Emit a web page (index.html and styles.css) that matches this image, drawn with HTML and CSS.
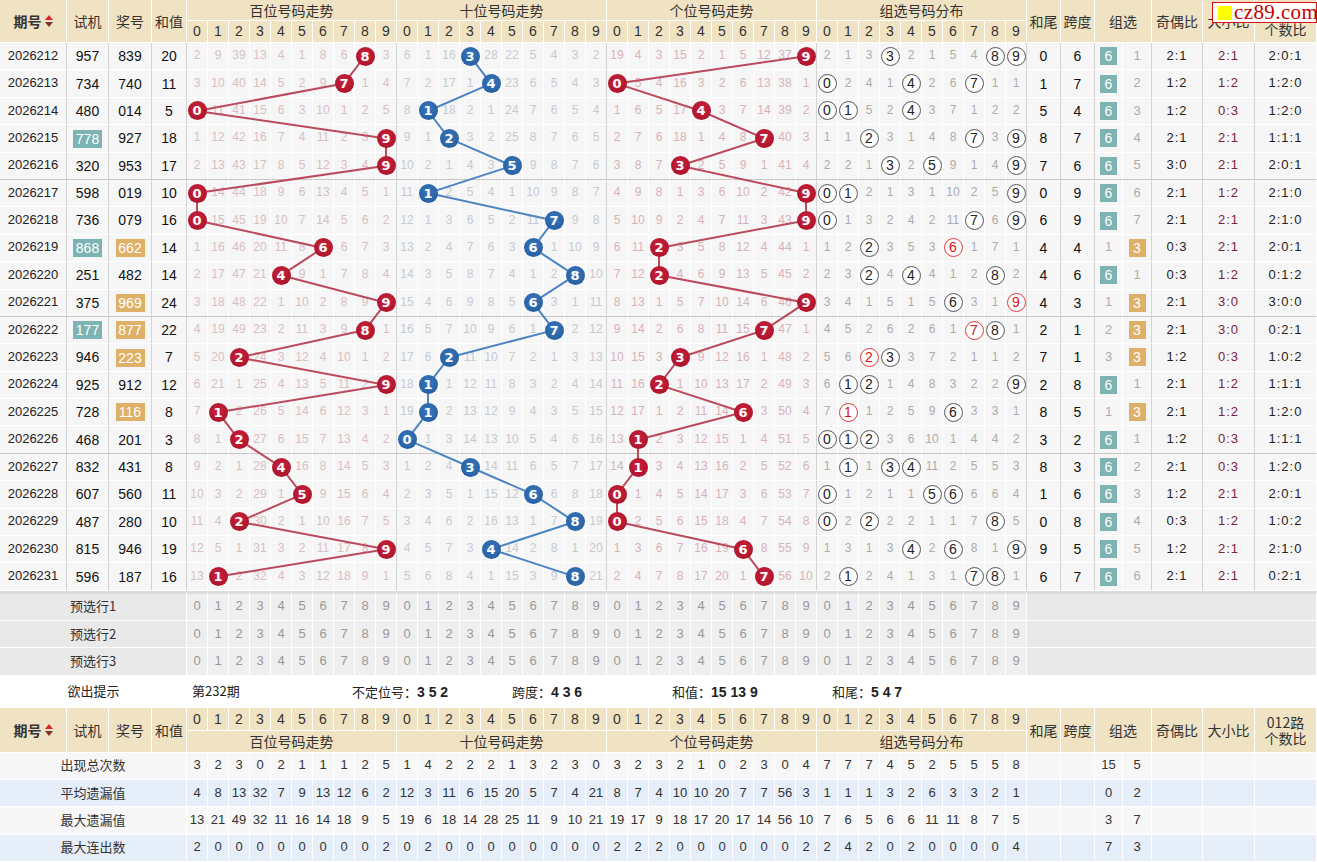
FILE: index.html
```html
<!DOCTYPE html>
<html lang="zh-CN">
<head>
<meta charset="utf-8">
<title>3D走势图</title>
<link rel="stylesheet" href="styles.css">
</head>
<body>
<div class="wrap" id="wrap">
  <table class="chart">
    <colgroup>
      <col class="c-qh"><col class="c-sj"><col class="c-jh"><col class="c-hz">
      <col span="40" class="c-d">
      <col class="c-hw"><col class="c-kd"><col class="c-zx"><col class="c-zx2"><col class="c-jo"><col class="c-dx"><col class="c-lu">
    </colgroup>
    <thead class="head">
      <tr class="h1">
        <th rowspan="2" class="qhh"><span class="qht">期号<svg class="sort" width="8" height="12" viewBox="0 0 8 12"><path d="M4 0L8 5H0Z" fill="#d9262b"/><path d="M0 7H8L4 12Z" fill="#7a3232"/></svg></span></th>
        <th rowspan="2">试机</th>
        <th rowspan="2">奖号</th>
        <th rowspan="2">和值</th>
        <th colspan="10" class="gt">百位号码走势</th>
        <th colspan="10" class="gt">十位号码走势</th>
        <th colspan="10" class="gt">个位号码走势</th>
        <th colspan="10" class="gt">组选号码分布</th>
        <th rowspan="2">和尾</th>
        <th rowspan="2">跨度</th>
        <th rowspan="2" colspan="2">组选</th>
        <th rowspan="2">奇偶比</th>
        <th rowspan="2">大小比</th>
        <th rowspan="2">012路<br>个数比</th>
      </tr>
      <tr class="h2">
        <th class="dg">0</th><th class="dg">1</th><th class="dg">2</th><th class="dg">3</th><th class="dg">4</th><th class="dg">5</th><th class="dg">6</th><th class="dg">7</th><th class="dg">8</th><th class="dg">9</th>
        <th class="dg">0</th><th class="dg">1</th><th class="dg">2</th><th class="dg">3</th><th class="dg">4</th><th class="dg">5</th><th class="dg">6</th><th class="dg">7</th><th class="dg">8</th><th class="dg">9</th>
        <th class="dg">0</th><th class="dg">1</th><th class="dg">2</th><th class="dg">3</th><th class="dg">4</th><th class="dg">5</th><th class="dg">6</th><th class="dg">7</th><th class="dg">8</th><th class="dg">9</th>
        <th class="dg">0</th><th class="dg">1</th><th class="dg">2</th><th class="dg">3</th><th class="dg">4</th><th class="dg">5</th><th class="dg">6</th><th class="dg">7</th><th class="dg">8</th><th class="dg">9</th>
      </tr>
    </thead>
    <tbody id="rows"></tbody>
    <tbody id="pre"></tbody>
    <tbody>
      <tr class="hint">
        <td colspan="4" class="hlab">欲出提示</td>
        <td colspan="47" class="hcont">
          <div class="hints">
            <span>第232期</span>
            <span>不定位号：<b>3 5 2</b></span>
            <span>跨度：<b>4 3 6</b></span>
            <span>和值：<b>15 13 9</b></span>
            <span>和尾：<b>5 4 7</b></span>
          </div>
        </td>
      </tr>
    </tbody>
    <tbody class="head">
      <tr class="fh1">
        <th rowspan="2" class="qhh"><span class="qht">期号<svg class="sort" width="8" height="12" viewBox="0 0 8 12"><path d="M4 0L8 5H0Z" fill="#d9262b"/><path d="M0 7H8L4 12Z" fill="#7a3232"/></svg></span></th>
        <th rowspan="2">试机</th>
        <th rowspan="2">奖号</th>
        <th rowspan="2">和值</th>
        <th class="dg">0</th><th class="dg">1</th><th class="dg">2</th><th class="dg">3</th><th class="dg">4</th><th class="dg">5</th><th class="dg">6</th><th class="dg">7</th><th class="dg">8</th><th class="dg">9</th>
        <th class="dg">0</th><th class="dg">1</th><th class="dg">2</th><th class="dg">3</th><th class="dg">4</th><th class="dg">5</th><th class="dg">6</th><th class="dg">7</th><th class="dg">8</th><th class="dg">9</th>
        <th class="dg">0</th><th class="dg">1</th><th class="dg">2</th><th class="dg">3</th><th class="dg">4</th><th class="dg">5</th><th class="dg">6</th><th class="dg">7</th><th class="dg">8</th><th class="dg">9</th>
        <th class="dg">0</th><th class="dg">1</th><th class="dg">2</th><th class="dg">3</th><th class="dg">4</th><th class="dg">5</th><th class="dg">6</th><th class="dg">7</th><th class="dg">8</th><th class="dg">9</th>
        <th rowspan="2">和尾</th>
        <th rowspan="2">跨度</th>
        <th rowspan="2" colspan="2">组选</th>
        <th rowspan="2">奇偶比</th>
        <th rowspan="2">大小比</th>
        <th rowspan="2">012路<br>个数比</th>
      </tr>
      <tr class="fh2">
        <th colspan="10" class="gt">百位号码走势</th>
        <th colspan="10" class="gt">十位号码走势</th>
        <th colspan="10" class="gt">个位号码走势</th>
        <th colspan="10" class="gt">组选号码分布</th>
      </tr>
    </tbody>
    <tbody id="stats"></tbody>
  </table>
  <svg id="lines" class="lines" width="1317" height="862"></svg>
  <div class="logo"><span class="sq"></span><span class="lt">cz89.com</span></div>
</div>
<script src="app.js"></script>
</body>
</html>
```

FILE: styles.css
```css
* { box-sizing: border-box; }
body {
  margin: 0;
  background: #fff;
  color: #222;
  font-family: "Liberation Sans", "Noto Sans CJK SC", sans-serif;
}
.wrap { position: relative; width: 1317px; height: 862px; overflow: hidden; }
.chart { border-collapse: separate; border-spacing: 0; table-layout: fixed; width: 1317px; }
.c-qh { width: 67px; } .c-sj { width: 42px; } .c-jh { width: 43px; } .c-hz { width: 35px; }
.c-d { width: 21px; }
.c-hw { width: 34px; } .c-kd { width: 34px; } .c-zx { width: 28px; } .c-zx2 { width: 29px; }
.c-jo { width: 51px; } .c-dx { width: 52px; } .c-lu { width: 62px; }

.chart th, .chart td { padding: 0; text-align: center; vertical-align: middle; white-space: nowrap; line-height: 1.15; }

/* headers */
.head th {
  background: #f0e3c3;
  color: #333;
  font-family: "Noto Sans CJK SC", sans-serif;
  font-weight: normal;
  font-size: 14px;
  border-right: 1px solid #fff;
  border-bottom: 1px solid #fff;
}
.head th.gt { font-size: 14px; }
.head th.dg { font-family: "Liberation Sans", sans-serif; font-size: 14px; }
.h1 { height: 21px; } .h2 { height: 22px; }
.fh1 { height: 23px; } .fh2 { height: 22px; }
.qht { display: inline-flex; align-items: center; gap: 3px; font-weight: bold; }
.sort { display: block; }

/* data rows */
tr.d { height: 27.4px; }
tr.d td {
  background: #f6f6f6;
  border-right: 1px solid #fff;
  border-bottom: 1px solid #fff;
  font-size: 12px;
}
tr.d td.v { border-right-color: #d3d3d3; }
tr.d.g5 td { border-bottom-color: #c6c6c6; }
tr.d td.qh { font-size: 13px; color: #222; }
tr.d td.big { font-size: 14px; color: #111; }
.mb { color: #d8bfc4; }
.ms { color: #c6cad1; }
.mg { color: #d6b3ba; }
.mz { color: #acacac; }
tr.d td.zc { font-size: 13px; }
tr.d td.ratio { font-size: 13px; letter-spacing: 1px; color: #222; }
tr.d td.dx { color: #7a2243; }

.ball {
  display: inline-block;
  position: relative;
  z-index: 2;
  width: 19px;
  height: 19px;
  border-radius: 50%;
  color: #fff;
  font: bold 13px/19px "DejaVu Sans", sans-serif;
  vertical-align: middle;
}
.pb, .pg { background: radial-gradient(circle at 50% 40%, #c9223c, #a50f26); }
.ps { background: radial-gradient(circle at 50% 40%, #3876bb, #22599c); }

.ring {
  display: inline-block;
  width: 19px;
  height: 19px;
  border: 1.5px solid #5c5c5c;
  border-radius: 50%;
  font-size: 14px;
  line-height: 16px;
  color: #222;
  background: radial-gradient(circle, #fff 55%, #e2e2e2 100%);
  vertical-align: middle;
}
.ring.rr { border-color: #e43c3c; color: #d41414; background: #fff; }

.hl { display: inline-block; width: 29px; height: 18px; line-height: 18px; color: #fff; vertical-align: middle; }
.box { display: inline-block; width: 17px; height: 18px; line-height: 18px; color: #fff; font-size: 14px; vertical-align: middle; }
.tl { background: #7db3b3; }
.or { background: #dfb068; }

/* preselect rows */
tr.pre { height: 27.3px; }
tr.pre.first { height: 30.3px; }
tr.pre td { border-right: 1px solid #fff; border-bottom: 1px solid #fff; }
tr.pre.first td { border-top: 3px solid #dcdcdc; }
tr.pre td.plab { background: #e9e9e9; font-family: "Noto Sans CJK SC", sans-serif; font-size: 13px; color: #333; }
tr.pre td.pd { background: #efefef; color: #999; font-size: 13px; }
tr.pre td.pr { background: #e9e9e9; }

/* hint row */
tr.hint { height: 32px; }
tr.hint td { background: #fff; font-family: "Noto Sans CJK SC", sans-serif; font-size: 13px; color: #222; }
.hints { display: flex; padding-left: 5px; }
.hints span { width: 160px; text-align: left; }
.hints b { font-family: "Liberation Sans", sans-serif; font-size: 14px; }

/* stats */
tr.st { height: 27.3px; }
tr.st td { background: #f7f7f7; border-right: 1px solid #fff; border-bottom: 1px solid #fff; font-size: 13px; color: #333; }
tr.st.blue td { background: #e6eef9; }
tr.st td.slab { font-family: "Noto Sans CJK SC", sans-serif; font-size: 13px; color: #333; }

.lines { position: absolute; left: 0; top: 0; z-index: 1; pointer-events: none; }

.logo {
  position: absolute;
  top: 2px;
  left: 1212px;
  width: 105px;
  height: 21px;
  z-index: 5;
  display: flex;
  align-items: center;
  gap: 2px;
  padding-left: 5px;
  background: #fff;
  border: 1px solid #d11;
}
.logo .sq { flex: none; width: 14px; height: 14px; background: #ffff00; }
.logo .lt { font: 21px/1 "Liberation Serif", serif; color: #c80000; letter-spacing: 0.4px; }
```

FILE: app.js
```js
(function () {
  var D = [
    ["957","839",20,[2,9,39,13,4,1,8,6,0,3],[6,1,16,0,28,22,5,4,3,2],[19,4,3,15,2,1,5,12,37,0],[2,1,3,0,2,1,5,4,0,0],0,6,1,"2:1","2:1","2:0:1"],
    ["734","740",11,[3,10,40,14,5,2,9,0,1,4],[7,2,17,1,0,23,6,5,4,3],[0,5,4,16,3,2,6,13,38,1],[0,2,4,1,0,2,6,0,1,1],1,7,2,"1:2","1:2","1:2:0"],
    ["480","014",5,[0,11,41,15,6,3,10,1,2,5],[8,0,18,2,1,24,7,6,5,4],[1,6,5,17,0,3,7,14,39,2],[0,0,5,2,0,3,7,1,2,2],5,4,3,"1:2","0:3","1:2:0"],
    ["778","927",18,[1,12,42,16,7,4,11,2,3,0],[9,1,0,3,2,25,8,7,6,5],[2,7,6,18,1,4,8,0,40,3],[1,1,0,3,1,4,8,0,3,0],8,7,4,"2:1","2:1","1:1:1"],
    ["320","953",17,[2,13,43,17,8,5,12,3,4,0],[10,2,1,4,3,0,9,8,7,6],[3,8,7,0,2,5,9,1,41,4],[2,2,1,0,2,0,9,1,4,0],7,6,5,"3:0","2:1","2:0:1"],
    ["598","019",10,[0,14,44,18,9,6,13,4,5,1],[11,0,2,5,4,1,10,9,8,7],[4,9,8,1,3,6,10,2,42,0],[0,0,2,1,3,1,10,2,5,0],0,9,6,"2:1","1:2","2:1:0"],
    ["736","079",16,[0,15,45,19,10,7,14,5,6,2],[12,1,3,6,5,2,11,0,9,8],[5,10,9,2,4,7,11,3,43,0],[0,1,3,2,4,2,11,0,6,0],6,9,7,"2:1","2:1","2:1:0"],
    ["868","662",14,[1,16,46,20,11,8,0,6,7,3],[13,2,4,7,6,3,0,1,10,9],[6,11,0,3,5,8,12,4,44,1],[1,2,0,3,5,3,0,1,7,1],4,4,1,"0:3","2:1","2:0:1"],
    ["251","482",14,[2,17,47,21,0,9,1,7,8,4],[14,3,5,8,7,4,1,2,0,10],[7,12,0,4,6,9,13,5,45,2],[2,3,0,4,0,4,1,2,0,2],4,6,1,"0:3","1:2","0:1:2"],
    ["375","969",24,[3,18,48,22,1,10,2,8,9,0],[15,4,6,9,8,5,0,3,1,11],[8,13,1,5,7,10,14,6,46,0],[3,4,1,5,1,5,0,3,1,0],4,3,1,"2:1","3:0","3:0:0"],
    ["177","877",22,[4,19,49,23,2,11,3,9,0,1],[16,5,7,10,9,6,1,0,2,12],[9,14,2,6,8,11,15,0,47,1],[4,5,2,6,2,6,1,0,0,1],2,1,2,"2:1","3:0","0:2:1"],
    ["946","223",7,[5,20,0,24,3,12,4,10,1,2],[17,6,0,11,10,7,2,1,3,13],[10,15,3,0,9,12,16,1,48,2],[5,6,0,0,3,7,2,1,1,2],7,1,3,"1:2","0:3","1:0:2"],
    ["925","912",12,[6,21,1,25,4,13,5,11,2,0],[18,0,1,12,11,8,3,2,4,14],[11,16,0,1,10,13,17,2,49,3],[6,0,0,1,4,8,3,2,2,0],2,8,1,"2:1","1:2","1:1:1"],
    ["728","116",8,[7,0,2,26,5,14,6,12,3,1],[19,0,2,13,12,9,4,3,5,15],[12,17,1,2,11,14,0,3,50,4],[7,0,1,2,5,9,0,3,3,1],8,5,1,"2:1","1:2","1:2:0"],
    ["468","201",3,[8,1,0,27,6,15,7,13,4,2],[0,1,3,14,13,10,5,4,6,16],[13,0,2,3,12,15,1,4,51,5],[0,0,0,3,6,10,1,4,4,2],3,2,1,"1:2","0:3","1:1:1"],
    ["832","431",8,[9,2,1,28,0,16,8,14,5,3],[1,2,4,0,14,11,6,5,7,17],[14,0,3,4,13,16,2,5,52,6],[1,0,1,0,0,11,2,5,5,3],8,3,2,"2:1","0:3","1:2:0"],
    ["607","560",11,[10,3,2,29,1,0,9,15,6,4],[2,3,5,1,15,12,0,6,8,18],[0,1,4,5,14,17,3,6,53,7],[0,1,2,1,1,0,0,6,6,4],1,6,3,"1:2","2:1","2:0:1"],
    ["487","280",10,[11,4,0,30,2,1,10,16,7,5],[3,4,6,2,16,13,1,7,0,19],[0,2,5,6,15,18,4,7,54,8],[0,2,0,2,2,1,1,7,0,5],0,8,4,"0:3","1:2","1:0:2"],
    ["815","946",19,[12,5,1,31,3,2,11,17,8,0],[4,5,7,3,0,14,2,8,1,20],[1,3,6,7,16,19,0,8,55,9],[1,3,1,3,0,2,0,8,1,0],9,5,5,"1:2","2:1","2:1:0"],
    ["596","187",16,[13,0,2,32,4,3,12,18,9,1],[5,6,8,4,1,15,3,9,0,21],[2,4,7,8,17,20,1,0,56,10],[2,0,2,4,1,3,1,0,0,1],6,7,6,"2:1","2:1","0:2:1"]
  ];
  var S = [
    ["出现总次数",[3,2,3,0,2,1,1,1,2,5,1,4,2,2,2,1,3,2,3,0,3,2,3,2,1,0,2,3,0,4,7,7,7,4,5,2,5,5,5,8],15,5],
    ["平均遗漏值",[4,8,13,32,7,9,13,12,6,2,12,3,11,6,15,20,5,7,4,21,8,7,4,10,10,20,7,7,56,3,1,1,1,3,2,6,3,3,2,1],0,2],
    ["最大遗漏值",[13,21,49,32,11,16,14,18,9,5,19,6,18,14,28,25,11,9,10,21,19,17,9,18,17,20,17,14,56,10,7,6,5,6,6,11,11,8,7,5],3,7],
    ["最大连出数",[2,0,0,0,0,0,0,0,0,2,0,2,0,0,0,0,0,0,0,0,2,2,2,0,0,0,0,0,0,2,2,4,2,0,2,0,0,0,0,4],7,3]
  ];
  function pair(s) { return s[0] === s[1] || s[1] === s[2] || s[0] === s[2]; }
  var pc = ["pb", "ps", "pg"], mc = ["mb", "ms", "mg"];
  var h = "";
  D.forEach(function (r, i) {
    var sj = r[0], jh = r[1], p = pair(jh);
    h += '<tr class="d' + ((i === 4 || i === 9 || i === 14) ? ' g5' : '') + '">';
    h += '<td class="v qh">' + (2026212 + i) + '</td>';
    h += '<td class="v big">' + (pair(sj) ? '<span class="hl tl">' + sj + '</span>' : sj) + '</td>';
    h += '<td class="v big">' + (p ? '<span class="hl or">' + jh + '</span>' : jh) + '</td>';
    h += '<td class="v big">' + r[2] + '</td>';
    for (var k = 0; k < 3; k++) {
      var dg = +jh[k], a = r[3 + k];
      for (var d = 0; d < 10; d++) {
        var c = d === 9 ? ' v' : '';
        if (d === dg) h += '<td class="n' + c + '"><span class="ball ' + pc[k] + '">' + d + '</span></td>';
        else h += '<td class="n ' + mc[k] + c + '">' + a[d] + '</td>';
      }
    }
    for (var d2 = 0; d2 < 10; d2++) {
      var cnt = 0;
      for (var q = 0; q < 3; q++) if (+jh[q] === d2) cnt++;
      var c2 = d2 === 9 ? ' v' : '';
      if (cnt) h += '<td class="n' + c2 + '"><span class="ring' + (cnt > 1 ? ' rr' : '') + '">' + d2 + '</span></td>';
      else h += '<td class="n mz' + c2 + '">' + r[6][d2] + '</td>';
    }
    h += '<td class="v big">' + r[7] + '</td><td class="v big">' + r[8] + '</td>';
    if (p) h += '<td class="mz zc">' + r[9] + '</td><td class="v"><span class="box or">3</span></td>';
    else h += '<td><span class="box tl">6</span></td><td class="v mz zc">' + r[9] + '</td>';
    h += '<td class="v ratio">' + r[10] + '</td><td class="v ratio dx">' + r[11] + '</td><td class="ratio">' + r[12] + '</td></tr>';
  });
  document.getElementById("rows").innerHTML = h;

  var ph = "";
  for (var i = 1; i <= 3; i++) {
    ph += '<tr class="pre' + (i === 1 ? ' first' : '') + '"><td colspan="4" class="plab">预选行' + i + '</td>';
    for (var g = 0; g < 4; g++) for (var d = 0; d < 10; d++) ph += '<td class="pd">' + d + '</td>';
    ph += '<td colspan="7" class="pr"></td></tr>';
  }
  document.getElementById("pre").innerHTML = ph;

  var sh = "";
  S.forEach(function (s, i) {
    sh += '<tr class="st' + (i % 2 ? ' blue' : '') + '"><td colspan="4" class="slab">' + s[0] + '</td>';
    s[1].forEach(function (v) { sh += '<td>' + v + '</td>'; });
    sh += '<td></td><td></td><td>' + s[2] + '</td><td>' + s[3] + '</td><td></td><td></td><td></td></tr>';
  });
  document.getElementById("stats").innerHTML = sh;

  function draw() {
    var wrap = document.getElementById("wrap");
    var wr = wrap.getBoundingClientRect();
    var svg = document.getElementById("lines");
    var sets = [["pb", "#bb4a5d"], ["ps", "#4d84c2"], ["pg", "#bb4a5d"]];
    var out = "";
    sets.forEach(function (s) {
      var pts = [];
      document.querySelectorAll(".ball." + s[0]).forEach(function (el) {
        var r = el.getBoundingClientRect();
        pts.push((r.left + r.width / 2 - wr.left).toFixed(1) + "," + (r.top + r.height / 2 - wr.top).toFixed(1));
      });
      out += '<polyline points="' + pts.join(" ") + '" fill="none" stroke="' + s[1] + '" stroke-width="2" stroke-linejoin="round"/>';
    });
    svg.innerHTML = out;
  }
  draw();
  window.addEventListener("load", draw);
})();
```
